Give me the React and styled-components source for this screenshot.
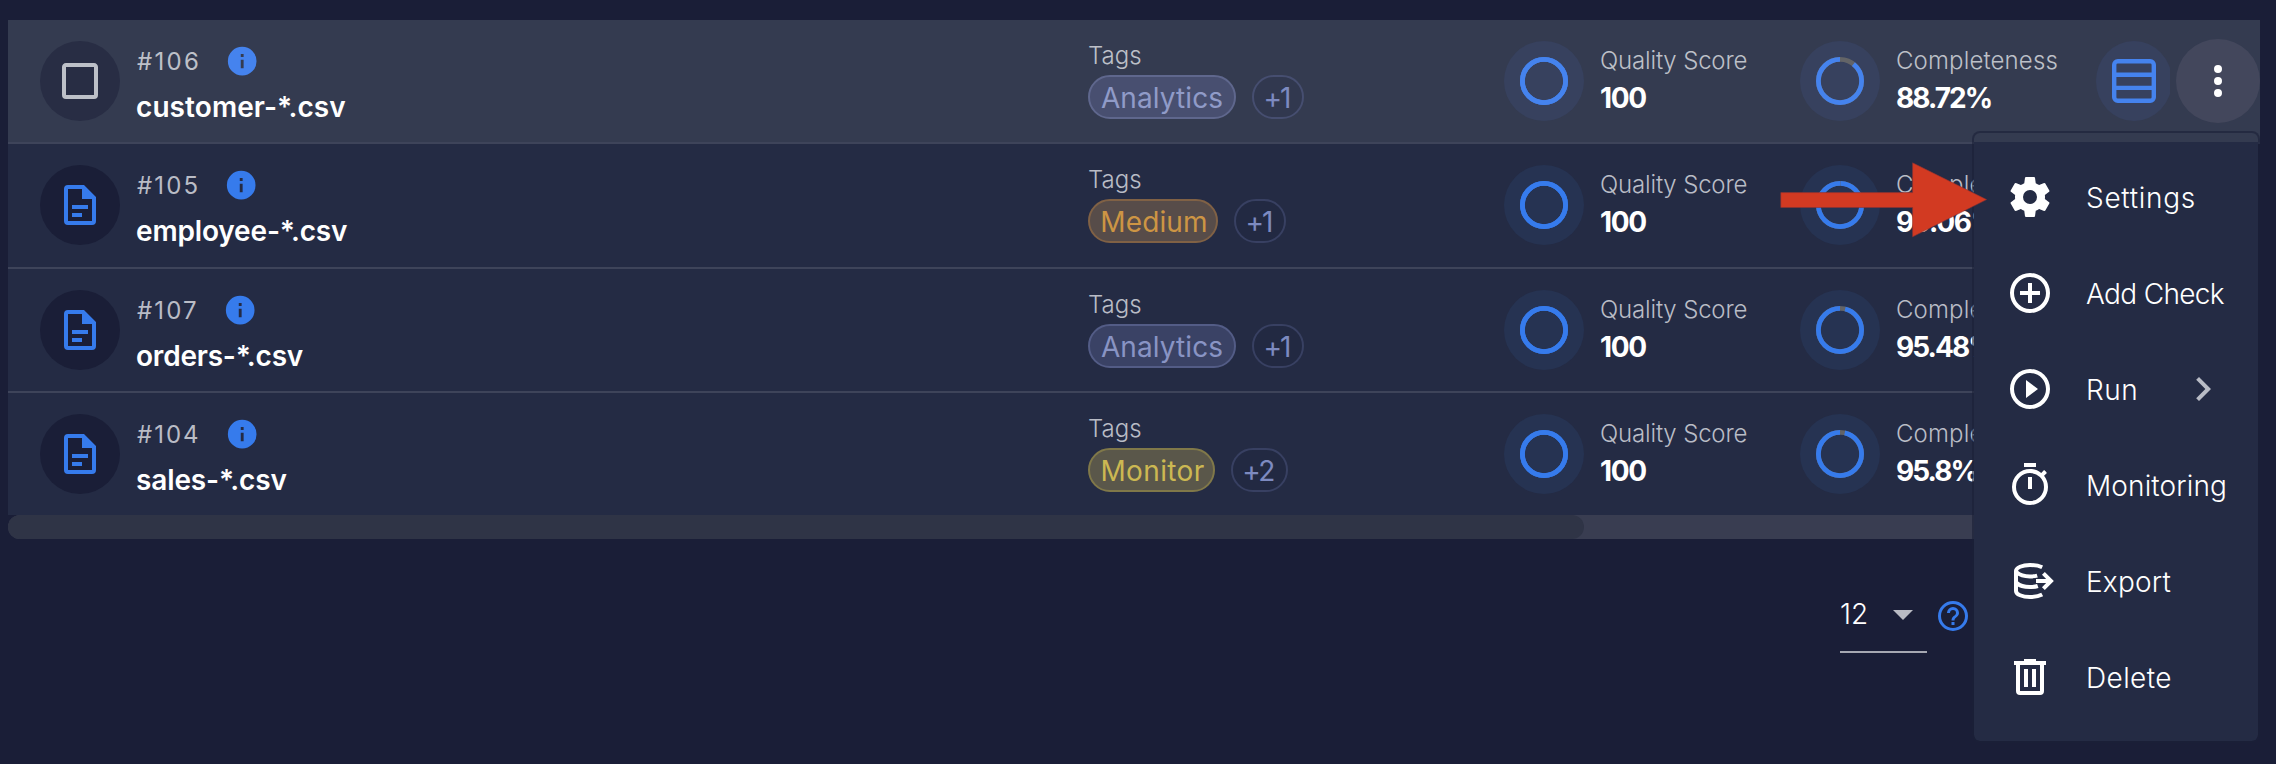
import React from "react";
import styled, { createGlobalStyle, css } from "styled-components";

const GlobalStyle = createGlobalStyle`
  *, *::before, *::after { box-sizing: border-box; }
  body { margin: 0; background: #1a1e37; }
  svg { display: block; flex: none; }
`;

const Page = styled.main`
  position: relative;
  width: 2276px;
  height: 764px;
  padding: 20px 16px 0 8px;
  overflow: hidden;
  background: #1a1e37;
  color: #fff;
  font-family: Inter, "Liberation Sans", sans-serif;
  font-size: 28px;
  line-height: 36px;
  white-space: nowrap;
`;

const Table = styled.section`
  display: flex;
  flex-direction: column;
  width: 2252px;
`;

const Row = styled.div`
  --accent: ${(p) => (p.$hovered ? "#4583ee" : "#367bec")};
  --halo: ${(p) => (p.$hovered ? "#37415e" : "#263352")};
  --muted: ${(p) => (p.$hovered ? "#bdc0c8" : "#b9bcc6")};
  --avatar: ${(p) => (p.$hovered ? "#282d44" : "#1a1e37")};
  --outline: ${(p) => (p.$hovered ? "#464e70" : "#384062")};
  --outline-fill: ${(p) => (p.$hovered ? "#31384f" : "#222942")};
  display: grid;
  grid-template-columns: 1080px 416px 296px 296px 80px 84px;
  width: ${(p) => (p.$hovered ? 2252 : 2250)}px;
  height: ${(p) => p.$height}px;
  background: ${(p) => (p.$hovered ? "#343b50" : "#242b44")};
  border-bottom: ${(p) => (p.$last ? "0" : "2px solid #3e445a")};
`;

const FileCell = styled.div`
  display: flex;
  gap: 16px;
  padding-left: 32px;
`;

const Avatar = styled.div`
  display: flex;
  align-items: center;
  justify-content: center;
  flex: none;
  width: 80px;
  height: 80px;
  margin-top: 21px;
  border-radius: 50%;
  background: var(--avatar);
  color: ${(p) => (p.$muted ? "var(--muted)" : "var(--accent)")};
`;

const FileInfo = styled.div`
  display: flex;
  flex-direction: column;
  gap: 12px;
  padding-top: 25px;
`;

const IdLine = styled.div`
  display: flex;
  align-items: center;
  gap: 24px;
  height: 32px;
  color: var(--accent);
`;

const Text = styled.span`
  letter-spacing: ${(p) => p.$spacing || 0}px;
`;

const Label = styled(Text)`
  color: var(--muted);
  font-size: 24px;
  font-weight: 300;
  line-height: 32px;
`;

const FileId = styled(Label)`
  padding: 2px 0 0 1px;
  font-weight: 400;
`;

const FileName = styled(Text)`
  font-weight: 600;
`;

const TagCell = styled.div`
  display: flex;
  flex-direction: column;
  gap: 3px;
  padding-top: 20px;
`;

const Chips = styled.div`
  display: flex;
  gap: 16px;
`;

const tones = {
  violet: css`
    background: #3a4265;
    border-color: #535c86;
    color: #8994c4;
  `,
  violetHover: css`
    background: #484f70;
    border-color: #5f678d;
    color: #909bc8;
  `,
  orange: css`
    padding-left: 2px;
    background: #574c49;
    border-color: #806145;
    color: #cd9544;
  `,
  yellow: css`
    padding-left: 2px;
    background: #5a574a;
    border-color: #807849;
    color: #ccb852;
  `,
  outline: css`
    padding-right: 3px;
    background: var(--outline-fill);
    border-color: var(--outline);
    color: #7d8ac0;
  `,
};

const Chip = styled.span`
  display: flex;
  justify-content: center;
  width: ${(p) => p.$width}px;
  height: 44px;
  padding-top: 3px;
  border: 2px solid;
  border-radius: 22px;
  letter-spacing: ${(p) => p.$spacing}px;
  ${(p) => tones[p.$tone]}
`;

const MetricCell = styled.div`
  display: flex;
  gap: 16px;
`;

const Halo = styled.div`
  display: flex;
  align-items: center;
  justify-content: center;
  flex: none;
  width: 80px;
  height: 80px;
  margin-top: 21px;
  border-radius: 50%;
  background: var(--halo);
  color: var(--accent);
`;

const MetricText = styled.div`
  display: flex;
  flex-direction: column;
  gap: 3px;
  padding-top: 25px;
`;

const MetricValue = styled(Text)`
  font-weight: 700;
`;

const FieldsSlot = styled.div`
  width: 74px;
  overflow: hidden;
`;

const FieldsButton = styled(Halo)`
  width: 76px;
`;

const MenuButton = styled.div`
  display: flex;
  align-items: center;
  justify-content: center;
  width: 84px;
  height: 84px;
  margin-top: 19px;
  border-radius: 50%;
  background: #43475c;
`;

const ScrollTrack = styled.div`
  height: 24px;
  width: 2248px;
  border-radius: 12px;
  background: #393d51;
`;

const ScrollThumb = styled.div`
  width: 1576px;
  height: 24px;
  border-radius: 12px;
  background: #2f3446;
`;

const Footer = styled.footer`
  display: flex;
  gap: 8px;
  padding: 37px 0 0 1832px;
  color: #367bec;
`;

const PageSize = styled.div`
  display: flex;
  align-items: center;
  gap: 11px;
  width: 87px;
  height: 77px;
  border-bottom: 2px solid #a6a8b2;
  color: #b9bbc4;
`;

const PageSizeValue = styled.span`
  color: #fff;
  font-weight: 300;
`;

const HelpSlot = styled.div`
  padding-top: 21.5px;
`;

const Menu = styled.nav`
  position: absolute;
  left: 1972px;
  top: 131px;
  width: 288px;
  padding: 16px 0;
  border: 2px solid rgba(27, 31, 55, 0.6);
  border-radius: 8px;
  background: linear-gradient(#343b50 9px, #242b44 9px) padding-box;
`;

const MenuItem = styled.div`
  display: flex;
  align-items: center;
  height: 96px;
  padding-left: 32px;
`;

const MenuLabel = styled(Text)`
  flex: 1;
  padding: 2px 0 0 32px;
  font-weight: 300;
`;

const Submenu = styled.span`
  padding-right: 31px;
  color: #b9bcc6;
`;

const Pointer = styled.svg`
  position: absolute;
  left: 1780px;
  top: 162px;
`;

const paths = {
  checkbox:
    "M19,3H5C3.89,3 3,3.89 3,5V19A2,2 0 0,0 5,21H19A2,2 0 0,0 21,19V5C21,3.89 20.1,3 19,3M19,5V19H5V5H19Z",
  file: "M6,2A2,2 0 0,0 4,4V20A2,2 0 0,0 6,22H18A2,2 0 0,0 20,20V8L14,2H6M6,4H13V9H18V20H6V4M8,12V14H16V12H8M8,16V18H13V16H8Z",
  info: "M13,9H11V7H13M13,17H11V11H13M12,2A10,10 0 0,0 2,12A10,10 0 0,0 12,22A10,10 0 0,0 22,12A10,10 0 0,0 12,2Z",
  dots: "M12,16A2,2 0 0,1 14,18A2,2 0 0,1 12,20A2,2 0 0,1 10,18A2,2 0 0,1 12,16M12,10A2,2 0 0,1 14,12A2,2 0 0,1 12,14A2,2 0 0,1 10,12A2,2 0 0,1 12,10M12,4A2,2 0 0,1 14,6A2,2 0 0,1 12,8A2,2 0 0,1 10,6A2,2 0 0,1 12,4Z",
  caret: "M7,10L12,15L17,10H7Z",
  chevron: "M8.59,16.58L13.17,12L8.59,7.41L10,6L16,12L10,18L8.59,16.58Z",
  help: "M11,18H13V16H11V18M12,2A10,10 0 0,0 2,12A10,10 0 0,0 12,22A10,10 0 0,0 22,12A10,10 0 0,0 12,2M12,20C7.59,20 4,16.41 4,12C4,7.59 7.59,4 12,4C16.41,4 20,7.59 20,12C20,16.41 16.41,20 12,20M12,6A4,4 0 0,0 8,10H10A2,2 0 0,1 12,8A2,2 0 0,1 14,10C14,12 11,11.75 11,15H13C13,12.75 16,12.5 16,10A4,4 0 0,0 12,6Z",
  cog: "M12,15.5A3.5,3.5 0 0,1 8.5,12A3.5,3.5 0 0,1 12,8.5A3.5,3.5 0 0,1 15.5,12A3.5,3.5 0 0,1 12,15.5M19.43,12.97C19.47,12.65 19.5,12.33 19.5,12C19.5,11.67 19.47,11.34 19.43,11L21.54,9.37C21.73,9.22 21.78,8.95 21.66,8.73L19.66,5.27C19.54,5.05 19.27,4.96 19.05,5.05L16.56,6.05C16.04,5.66 15.5,5.32 14.87,5.07L14.5,2.42C14.46,2.18 14.25,2 14,2H10C9.75,2 9.54,2.18 9.5,2.42L9.13,5.07C8.5,5.32 7.96,5.66 7.44,6.05L4.95,5.05C4.73,4.96 4.46,5.05 4.34,5.27L2.34,8.73C2.21,8.95 2.27,9.22 2.46,9.37L4.57,11C4.53,11.34 4.5,11.67 4.5,12C4.5,12.33 4.53,12.65 4.57,12.97L2.46,14.63C2.27,14.78 2.21,15.05 2.34,15.27L4.34,18.73C4.46,18.95 4.73,19.03 4.95,18.95L7.44,17.94C7.96,18.34 8.5,18.68 9.13,18.93L9.5,21.58C9.54,21.82 9.75,22 10,22H14C14.25,22 14.46,21.82 14.5,21.58L14.87,18.93C15.5,18.67 16.04,18.34 16.56,17.94L19.05,18.95C19.27,19.03 19.54,18.95 19.66,18.73L21.66,15.27C21.78,15.05 21.73,14.78 21.54,14.63L19.43,12.97Z",
  plus: "M12,20C7.59,20 4,16.41 4,12C4,7.59 7.59,4 12,4C16.41,4 20,7.59 20,12C20,16.41 16.41,20 12,20M12,2A10,10 0 0,0 2,12A10,10 0 0,0 12,22A10,10 0 0,0 22,12A10,10 0 0,0 12,2M13,7H11V11H7V13H11V17H13V13H17V11H13V7Z",
  play: "M12,20C7.59,20 4,16.41 4,12C4,7.59 7.59,4 12,4C16.41,4 20,7.59 20,12C20,16.41 16.41,20 12,20M12,2A10,10 0 0,0 2,12A10,10 0 0,0 12,22A10,10 0 0,0 22,12A10,10 0 0,0 12,2M10,16.5L16,12L10,7.5V16.5Z",
  timer:
    "M12,20A7,7 0 0,1 5,13A7,7 0 0,1 12,6A7,7 0 0,1 19,13A7,7 0 0,1 12,20M19.03,7.39L20.45,5.97C20,5.46 19.55,5 19.04,4.56L17.62,6C16.07,4.74 14.12,4 12,4A9,9 0 0,0 3,13A9,9 0 0,0 12,22C17,22 21,17.97 21,13C21,10.88 20.26,8.93 19.03,7.39M11,14H13V8H11M15,1H9V3H15V1Z",
  trash:
    "M9,3V4H4V6H5V19A2,2 0 0,0 7,21H17A2,2 0 0,0 19,19V6H20V4H15V3H9M7,6H17V19H7V6M9,8V17H11V8H9M13,8V17H15V8H13Z",
};

function Icon({ name, size = 48 }) {
  return (
    <svg width={size} height={size} viewBox="0 0 24 24">
      <path d={paths[name]} fill="currentColor" fillRule="evenodd" />
    </svg>
  );
}

function ExportIcon() {
  return (
    <svg width="48" height="48" viewBox="0 0 24 24" fill="none" stroke="currentColor" strokeWidth="2">
      <path d="M18.1,5.1C16.6,4.4 14.4,4 12,4C8.1,4 5,5.3 5,7V17C5,18.7 8.1,20 12,20C14.4,20 16.6,19.6 18.1,18.8" />
      <path d="M5.4,7.7C6.8,9 9.2,9.7 12,9.7C13.4,9.7 14.6,9.6 15.6,9.3" />
      <path d="M5.4,13C6.8,14.4 9.2,15 12,15C13.5,15 14.8,14.9 15.9,14.5" />
      <path d="M15,12H22M18.7,8.2L22.5,12L18.7,15.8" />
    </svg>
  );
}

function FieldsIcon() {
  return (
    <svg width="44" height="44" viewBox="0 0 44 44" fill="none" stroke="currentColor" strokeWidth="4.4">
      <rect x="2.2" y="2.2" width="39.6" height="39.6" rx="3.6" />
      <path d="M2,15.7H42M2,28.9H42" />
    </svg>
  );
}

function Ring({ value }) {
  const length = 2 * Math.PI * 21.6;
  return (
    <svg width="48" height="48" viewBox="0 0 48 48" fill="none" strokeWidth="4.8">
      <circle cx="24" cy="24" r="21.6" stroke={value < 100 ? "#636467" : "currentColor"} />
      <circle
        cx="24"
        cy="24"
        r="21.6"
        stroke="currentColor"
        strokeDasharray={`${(length * value) / 100} ${length}`}
        transform="matrix(0 -1 -1 0 48 48)"
      />
    </svg>
  );
}

function Metric({ label, labelSpacing, value, percent, spacing }) {
  return (
    <MetricCell>
      <Halo>
        <Ring value={percent} />
      </Halo>
      <MetricText>
        <Label $spacing={labelSpacing}>{label}</Label>
        <MetricValue $spacing={spacing}>{value}</MetricValue>
      </MetricText>
    </MetricCell>
  );
}

const rows = [
  {
    id: "#106", idSpacing: 2.3, name: "customer-*.csv", nameSpacing: 0.08, height: 124, hovered: true,
    tag: "Analytics", tone: "violetHover", tagWidth: 148, tagSpacing: 0.09,
    more: "+1", moreWidth: 52, moreSpacing: -1.9, completeness: 88.72, valueSpacing: -1.94,
  },
  {
    id: "#105", idSpacing: 2.13, name: "employee-*.csv", nameSpacing: -0.16, height: 125,
    tag: "Medium", tone: "orange", tagWidth: 130, tagSpacing: 0.12,
    more: "+1", moreWidth: 52, moreSpacing: -1.9, completeness: 99.06, valueSpacing: -1.3,
  },
  {
    id: "#107", idSpacing: 2.12, name: "orders-*.csv", nameSpacing: -0.2, height: 124,
    tag: "Analytics", tone: "violet", tagWidth: 148, tagSpacing: 0.09,
    more: "+1", moreWidth: 52, moreSpacing: -1.9, completeness: 95.48, valueSpacing: -1.94,
  },
  {
    id: "#104", idSpacing: 1.97, name: "sales-*.csv", nameSpacing: -0.12, height: 122, last: true,
    tag: "Monitor", tone: "yellow", tagWidth: 127, tagSpacing: 0.37,
    more: "+2", moreWidth: 57, moreSpacing: -1.6, completeness: 95.8, valueSpacing: -1.94,
  },
];

const menuItems = [
  { label: "Settings", icon: "cog", spacing: 0.69 },
  { label: "Add Check", icon: "plus", spacing: -0.65 },
  { label: "Run", icon: "play", spacing: 0.5, submenu: true },
  { label: "Monitoring", icon: "timer", spacing: 0.12 },
  { label: "Export", icon: "export", spacing: 0.2 },
  { label: "Delete", icon: "trash", spacing: 0.4 },
];

export default function App() {
  return (
    <Page>
      <GlobalStyle />
      <Table>
        {rows.map((r) => (
          <Row key={r.id} $hovered={r.hovered} $height={r.height} $last={r.last}>
            <FileCell>
              <Avatar $muted={r.hovered}>
                <Icon name={r.hovered ? "checkbox" : "file"} />
              </Avatar>
              <FileInfo>
                <IdLine>
                  <FileId $spacing={r.idSpacing}>{r.id}</FileId>
                  <Icon name="info" size={34.4} />
                </IdLine>
                <FileName $spacing={r.nameSpacing}>{r.name}</FileName>
              </FileInfo>
            </FileCell>
            <TagCell>
              <Label>Tags</Label>
              <Chips>
                <Chip $tone={r.tone} $width={r.tagWidth} $spacing={r.tagSpacing}>{r.tag}</Chip>
                <Chip $tone="outline" $width={r.moreWidth} $spacing={r.moreSpacing}>{r.more}</Chip>
              </Chips>
            </TagCell>
            <Metric label="Quality Score" labelSpacing={-0.17} value="100" percent={100} spacing={-1.3} />
            <Metric
              label="Completeness"
              labelSpacing={0.14}
              value={`${r.completeness}%`}
              percent={r.completeness}
              spacing={r.valueSpacing}
            />
            {r.hovered && (
              <>
                <FieldsSlot>
                  <FieldsButton>
                    <FieldsIcon />
                  </FieldsButton>
                </FieldsSlot>
                <MenuButton>
                  <Icon name="dots" />
                </MenuButton>
              </>
            )}
          </Row>
        ))}
      </Table>
      <ScrollTrack>
        <ScrollThumb />
      </ScrollTrack>
      <Footer>
        <PageSize>
          <PageSizeValue>12</PageSizeValue>
          <Icon name="caret" />
        </PageSize>
        <HelpSlot>
          <Icon name="help" size={36} />
        </HelpSlot>
      </Footer>
      <Menu>
        {menuItems.map((m) => (
          <MenuItem key={m.label}>
            {m.icon === "export" ? <ExportIcon /> : <Icon name={m.icon} />}
            <MenuLabel $spacing={m.spacing}>{m.label}</MenuLabel>
            {m.submenu && (
              <Submenu>
                <Icon name="chevron" />
              </Submenu>
            )}
          </MenuItem>
        ))}
      </Menu>
      <Pointer width="208" height="76" viewBox="0 0 208 76">
        <path
          d="M0.8,30.6H132.6V0.8L206.6,37.6L132.6,74.8V45.5H0.8Z"
          fill="#d23a22"
          stroke="#8c3233"
          strokeWidth="0.6"
        />
      </Pointer>
    </Page>
  );
}
